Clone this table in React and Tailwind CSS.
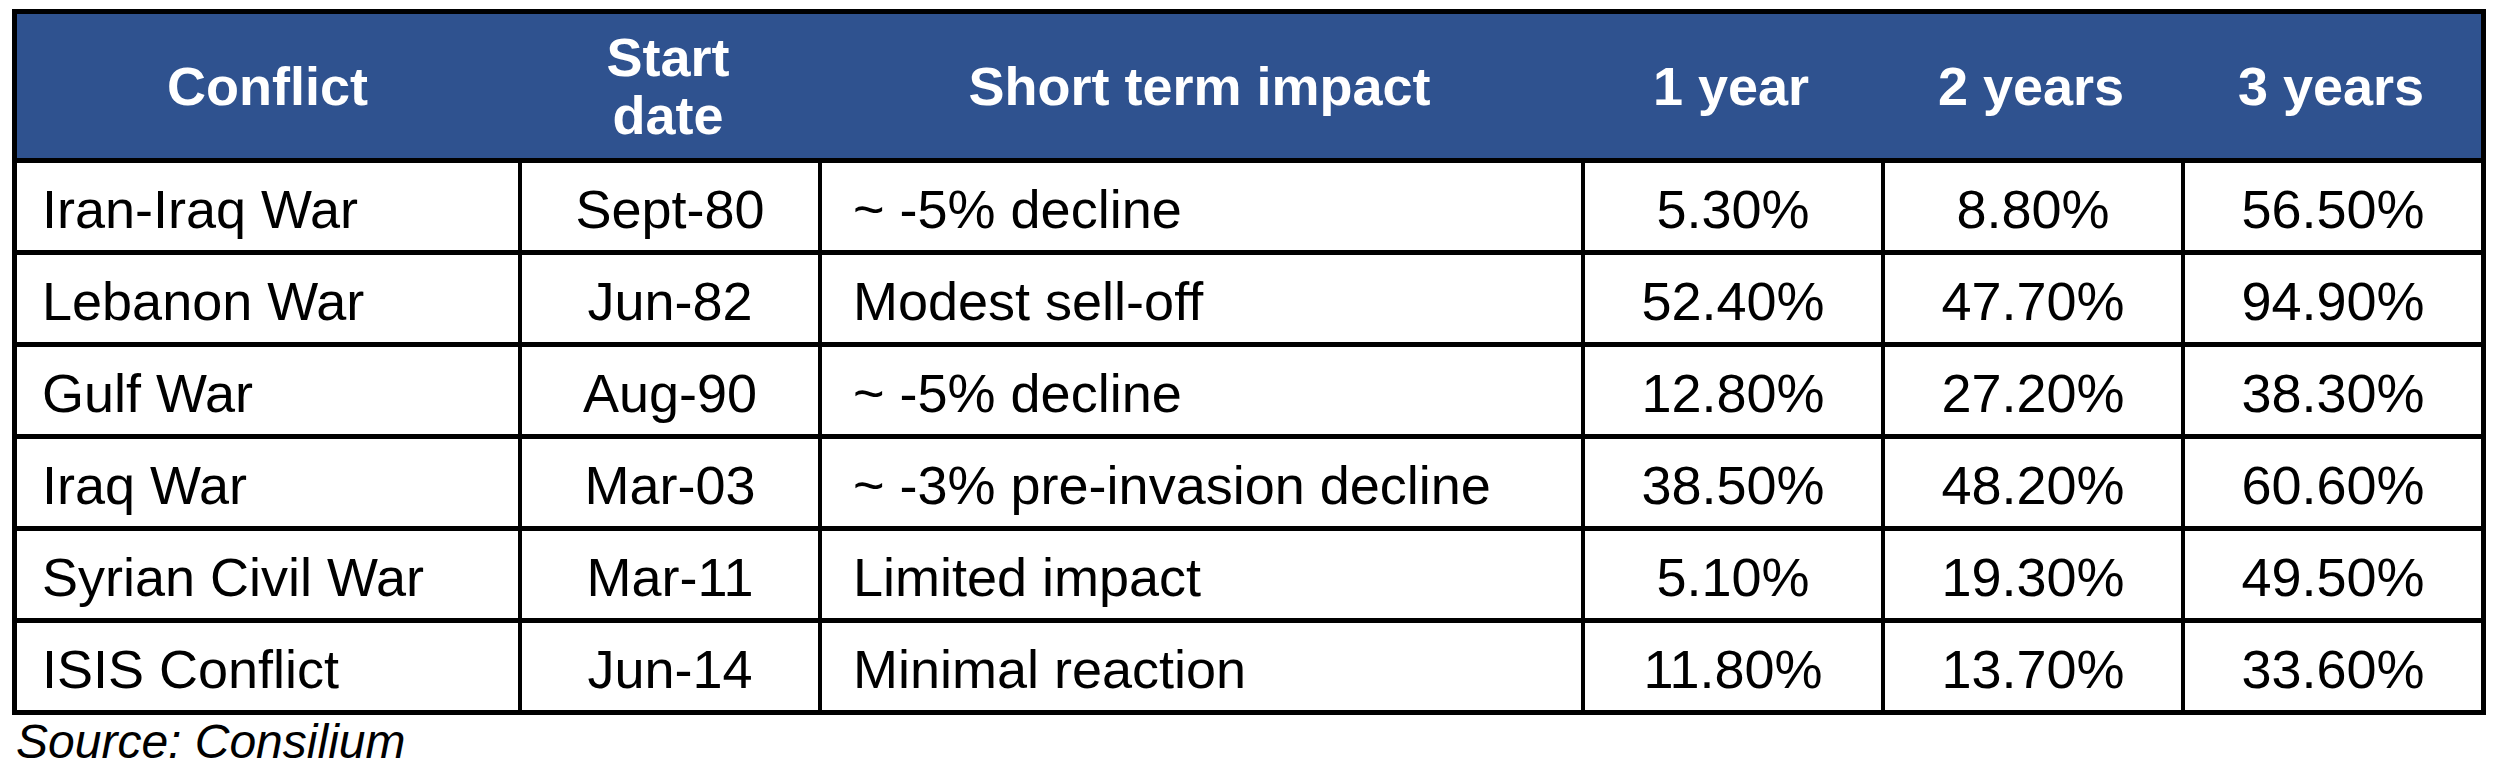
import React from 'react';

const rows = [
  { name: 'Iran-Iraq War', date: 'Sept-80', impact: '~ -5% decline', y1: '5.30%', y2: '8.80%', y3: '56.50%' },
  { name: 'Lebanon War', date: 'Jun-82', impact: 'Modest sell-off', y1: '52.40%', y2: '47.70%', y3: '94.90%' },
  { name: 'Gulf War', date: 'Aug-90', impact: '~ -5% decline', y1: '12.80%', y2: '27.20%', y3: '38.30%' },
  { name: 'Iraq War', date: 'Mar-03', impact: '~ -3% pre-invasion decline', y1: '38.50%', y2: '48.20%', y3: '60.60%' },
  { name: 'Syrian Civil War', date: 'Mar-11', impact: 'Limited impact', y1: '5.10%', y2: '19.30%', y3: '49.50%' },
  { name: 'ISIS Conflict', date: 'Jun-14', impact: 'Minimal reaction', y1: '11.80%', y2: '13.70%', y3: '33.60%' },
];

const App = () => {
  return (
    <div className="min-h-[772px] bg-white pt-[9px] pl-[12px] font-['Liberation_Sans',Arial,sans-serif] text-black">
      <div className="w-[2474px] border-[5px] border-black">
        {/* header */}
        <div className="flex h-[149px] border-b-[5px] border-black bg-[#2F528F] text-[54px] font-bold leading-[1.08] text-white">
          <div className="flex w-[501px] items-center justify-center">Conflict</div>
          <div className="flex w-[300px] items-center justify-center text-center">
            Start
            <br />
            date
          </div>
          <div className="flex w-[763px] items-center justify-center">Short term impact</div>
          <div className="flex w-[300px] items-center justify-center">1 year</div>
          <div className="flex w-[300px] items-center justify-center">2 years</div>
          <div className="flex w-[300px] items-center justify-center">3 years</div>
        </div>

        {/* body */}
        {rows.map((r, i) => (
          <div
            key={r.name}
            className={`flex text-[54px] leading-none ${i < rows.length - 1 ? 'h-[92px] border-b-[5px] border-black' : 'h-[87px]'}`}
          >
            <div className="flex w-[501px] items-center pt-1 pl-[25px]">{r.name}</div>
            <div className="flex w-[300px] items-center justify-center border-l-4 border-black pt-1">{r.date}</div>
            <div className="flex w-[763px] items-center border-l-4 border-black pt-1 pl-[31px]">{r.impact}</div>
            <div className="flex w-[300px] items-center justify-center border-l-4 border-black pt-1">{r.y1}</div>
            <div className="flex w-[300px] items-center justify-center border-l-4 border-black pt-1">{r.y2}</div>
            <div className="flex w-[300px] items-center justify-center border-l-4 border-black pt-1">{r.y3}</div>
          </div>
        ))}
      </div>
      <p className="mt-[3px] pl-[4px] text-[48px] italic leading-none">Source: Consilium</p>
    </div>
  );
};

export default App;
